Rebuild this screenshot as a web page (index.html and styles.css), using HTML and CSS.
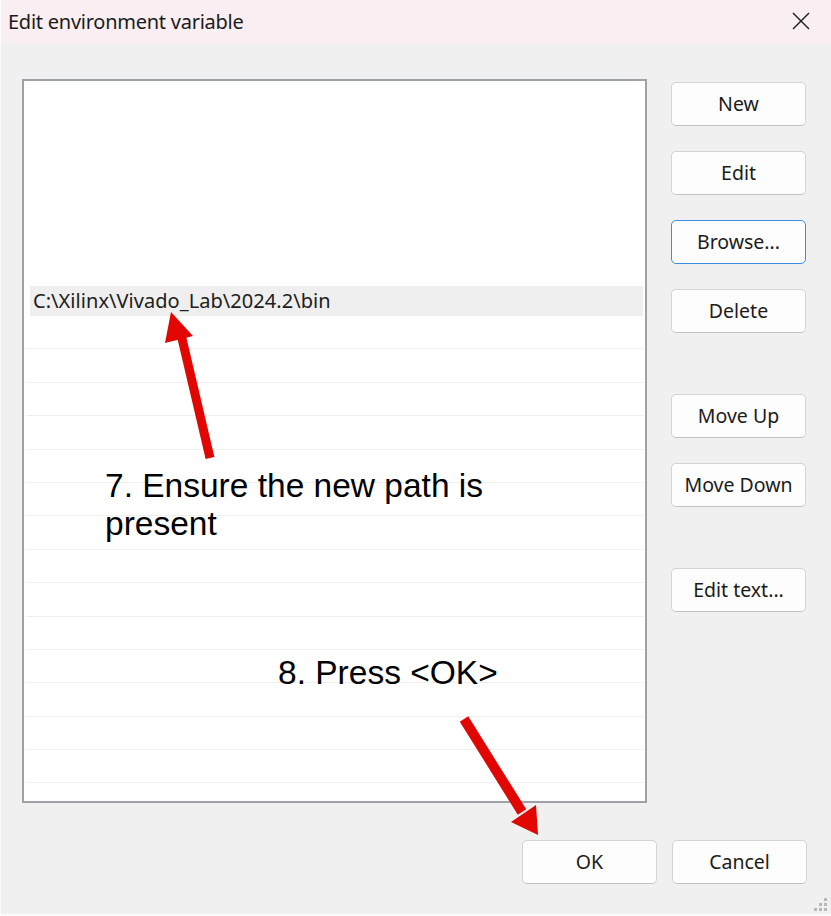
FILE: index.html
```html
<!DOCTYPE html>
<html lang="en">
<head>
    <meta charset="UTF-8">
    <meta name="viewport" content="width=device-width, initial-scale=1.0">
    <title>Edit environment variable</title>
    <link rel="stylesheet" href="styles.css">
</head>
<body>

<div class="window">

    <!-- Title bar -->
    <div class="titlebar">
        <span class="title">Edit environment variable</span>
        <span class="close">
            <svg width="20" height="20" viewBox="0 0 20 20">
                <path d="M2 2 L18 18 M18 2 L2 18" stroke="#1a1a1a" stroke-width="1.4" fill="none"/>
            </svg>
        </span>
    </div>

    <!-- Main area -->
    <div class="content">
        <div class="listbox">
            <div class="row selected">C:\Xilinx\Vivado_Lab\2024.2\bin</div>
            <div class="row"></div>
            <div class="row"></div>
            <div class="row"></div>
            <div class="row"></div>
            <div class="row"></div>
            <div class="row"></div>
            <div class="row"></div>
            <div class="row"></div>
            <div class="row"></div>
            <div class="row"></div>
            <div class="row"></div>
            <div class="row"></div>
            <div class="row"></div>
            <div class="row"></div>
        </div>

        <div class="side-buttons">
            <button class="btn">New</button>
            <button class="btn">Edit</button>
            <button class="btn focused">Browse...</button>
            <button class="btn">Delete</button>
            <button class="btn spaced">Move Up</button>
            <button class="btn">Move Down</button>
            <button class="btn spaced">Edit text...</button>
        </div>
    </div>

    <div class="footer">
        <button class="btn">OK</button>
        <button class="btn">Cancel</button>
    </div>

    <!-- Resize grip -->
    <svg class="grip" width="20" height="20" viewBox="0 0 20 20">
        <rect x="14" y="4" width="3" height="3" fill="#b9b9b9"/>
        <rect x="9" y="9" width="3" height="3" fill="#b9b9b9"/>
        <rect x="14" y="9" width="3" height="3" fill="#b9b9b9"/>
        <rect x="4" y="14" width="3" height="3" fill="#b9b9b9"/>
        <rect x="9" y="14" width="3" height="3" fill="#b9b9b9"/>
        <rect x="14" y="14" width="3" height="3" fill="#b9b9b9"/>
    </svg>

    <!-- Annotations drawn over the dialog -->
    <div class="note note-7">7. Ensure the new path is<br>present</div>
    <div class="note note-8">8. Press &lt;OK&gt;</div>

    <svg class="arrows" width="831" height="916" viewBox="0 0 831 916">
        <line x1="210" y1="458" x2="180" y2="330" stroke="#e10600" stroke-width="9"/>
        <polygon points="171,312 165,343 193,336" fill="#e10600"/>
        <line x1="464" y1="719" x2="522" y2="812" stroke="#e10600" stroke-width="10"/>
        <polygon points="538,835 511,822 536,805" fill="#e10600"/>
    </svg>

</div>

</body>
</html>
```

FILE: styles.css
```css
* {
    box-sizing: border-box;
}
body {
    margin: 0;
    font-family: "Noto Sans", "Open Sans", sans-serif;
    color: #1b1b1b;
}
.window {
    position: relative;
    width: 831px;
    height: 916px;
    background-color: #f0f0f0;
    border-left: 1px solid #fbfbfb;
    border-bottom: 2px solid #fbfbfb;
    overflow: hidden;
}
.titlebar {
    height: 44px;
    background-color: #f9eef1;
    display: flex;
    align-items: center;
    justify-content: space-between;
    padding: 0 20px 2px 7px;
}
.title {
    font-size: 20px;
    letter-spacing: -0.25px;
}
.close {
    display: flex;
}
.content {
    display: flex;
    gap: 24px;
    padding: 35px 0 0 21px;
}
.listbox {
    width: 625px;
    height: 724px;
    background-color: #ffffff;
    border: 2px solid #9ea2a8;
    padding: 205px 2px 0 0;
}
.row {
    height: 33.4px;
    border-bottom: 1px solid #efefef;
    margin-left: 2px;
}
.row.selected {
    height: 30px;
    border-bottom: none;
    margin-left: 6px;
    background-color: #efefef;
    padding-left: 3px;
    font-size: 20px;
    line-height: 29px;
    letter-spacing: 0.05px;
    color: #202020;
}
.side-buttons {
    display: flex;
    flex-direction: column;
    gap: 25px;
    padding-top: 3px;
}
.btn {
    width: 135px;
    height: 44px;
    background-color: #fdfdfd;
    border: 1px solid #d4d4d4;
    border-bottom-color: #c2c2c2;
    border-radius: 5px;
    font-family: "Noto Sans", "Open Sans", sans-serif;
    font-size: 19.5px;
    letter-spacing: 0;
    color: #1b1b1b;
    padding: 0 0 2px 0;
}
.btn.focused {
    border: 1.5px solid #3a8ee0;
}
.btn.spaced {
    margin-top: 36px;
}
.footer {
    display: flex;
    justify-content: flex-end;
    gap: 15px;
    padding: 37px 24px 0 0;
}
.grip {
    position: absolute;
    right: 1px;
    bottom: 0;
}
.note {
    position: absolute;
    font-family: "Liberation Sans", Arial, sans-serif;
    font-size: 33.5px;
    line-height: 38px;
    color: #000000;
}
.note-7 {
    left: 104px;
    top: 467px;
}
.note-8 {
    left: 277px;
    top: 654px;
}
.arrows {
    position: absolute;
    left: -1px;
    top: 0;
}
```
